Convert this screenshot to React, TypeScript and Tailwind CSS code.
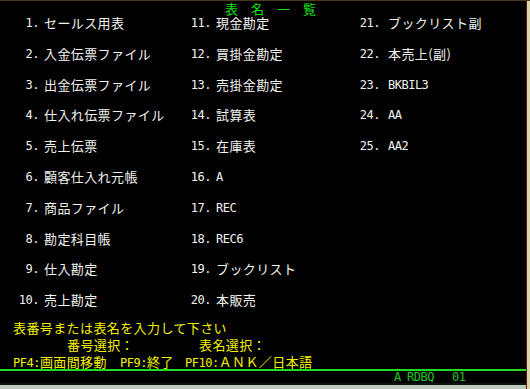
import React from 'react';

type Item = { no: string; name: string; latin?: boolean };

const columns: Item[][] = [
  [
    { no: '1.', name: 'セールス用表' },
    { no: '2.', name: '入金伝票ファイル' },
    { no: '3.', name: '出金伝票ファイル' },
    { no: '4.', name: '仕入れ伝票ファイル' },
    { no: '5.', name: '売上伝票' },
    { no: '6.', name: '顧客仕入れ元帳' },
    { no: '7.', name: '商品ファイル' },
    { no: '8.', name: '勘定科目帳' },
    { no: '9.', name: '仕入勘定' },
    { no: '10.', name: '売上勘定' },
  ],
  [
    { no: '11.', name: '現金勘定' },
    { no: '12.', name: '買掛金勘定' },
    { no: '13.', name: '売掛金勘定' },
    { no: '14.', name: '試算表' },
    { no: '15.', name: '在庫表' },
    { no: '16.', name: 'A', latin: true },
    { no: '17.', name: 'REC', latin: true },
    { no: '18.', name: 'REC6', latin: true },
    { no: '19.', name: 'ブックリスト' },
    { no: '20.', name: '本販売' },
  ],
  [
    { no: '21.', name: 'ブックリスト副' },
    { no: '22.', name: '本売上(副)' },
    { no: '23.', name: 'BKBIL3', latin: true },
    { no: '24.', name: 'AA', latin: true },
    { no: '25.', name: 'AA2', latin: true },
  ],
];

const jp = "font-['Noto_Sans_CJK_JP',sans-serif] text-[13px] tracking-[0.4px]";
const mono = "font-['DejaVu_Sans_Mono',monospace] text-[12px] tracking-[-0.5px]";

// column layout: [column width, number box width, gap before name]
const colCfg = [
  { w: 'w-[190px]', num: 'w-[39px]', gap: 'ml-[5px]' },
  { w: 'w-[169px]', num: 'w-[21px]', gap: 'ml-[5px]' },
  { w: 'flex-1', num: 'w-[21px]', gap: 'ml-[8px]' },
];

function Entry({ item, cfg }: { item: Item; cfg: (typeof colCfg)[number] }) {
  return (
    <div className="flex h-[14px] items-center leading-[14px]">
      <span className={`${mono} ${cfg.num} text-right`}>{item.no}</span>
      <span className={`${cfg.gap} ${item.latin ? mono : jp}`}>{item.name}</span>
    </div>
  );
}

export default function App() {
  return (
    <div className="flex h-[389px] w-[530px] overflow-hidden border-t border-[#4a3a1c] bg-black text-[#f2f2ee]">
      <div className="flex flex-1 flex-col">
        {/* title */}
        <div className="h-[15px] pl-[225px] font-['Noto_Sans_CJK_JP',sans-serif] text-[13px] leading-[15px] text-[#14e014]">
          表　名　一　覧
        </div>

        {/* menu list */}
        <div className="flex">
          {columns.map((col, ci) => (
            <div key={ci} className={`${colCfg[ci].w} flex flex-col gap-y-[16.8px]`}>
              {col.map((item) => (
                <Entry key={item.no} item={item} cfg={colCfg[ci]} />
              ))}
            </div>
          ))}
        </div>

        {/* prompt */}
        <div className="mt-[14px] flex flex-col text-[#f4f000]">
          <div className={`${jp} h-[17px] pl-[13px] leading-[14px]`}>表番号または表名を入力して下さい</div>
          <div className={`${jp} flex h-[17px] pl-[67px] leading-[14px]`}>
            <span className="w-[132px]">番号選択：</span>
            <span>表名選択：</span>
          </div>
          <div className="flex h-[14px] items-center pl-[13px] leading-[14px]">
            <span className="w-[107px]">
              <span className={mono}>PF4:</span>
              <span className={jp}>画面間移動</span>
            </span>
            <span className="w-[65px]">
              <span className={mono}>PF9:</span>
              <span className={jp}>終了</span>
            </span>
            <span>
              <span className={mono}>PF10:</span>
              <span className={jp}>ＡＮＫ／日本語</span>
            </span>
          </div>
        </div>

        <div className="h-[2px] bg-[#22dc22]" />

        {/* status line */}
        <div className={`${mono} flex h-[12px] items-center leading-[12px] text-[#20c420]`}>
          <span className="ml-[394px] w-[13px]">A</span>
          <span className="w-[45px]">RDBQ</span>
          <span>01</span>
        </div>

        <div className="flex-1 border-t-2 border-[#101410] bg-[#bcc8bc]" />
      </div>
      <div className="w-[1px] bg-[#5a1a10]" />
      <div className="w-[3px] bg-[#dcd6a8]" />
    </div>
  );
}
